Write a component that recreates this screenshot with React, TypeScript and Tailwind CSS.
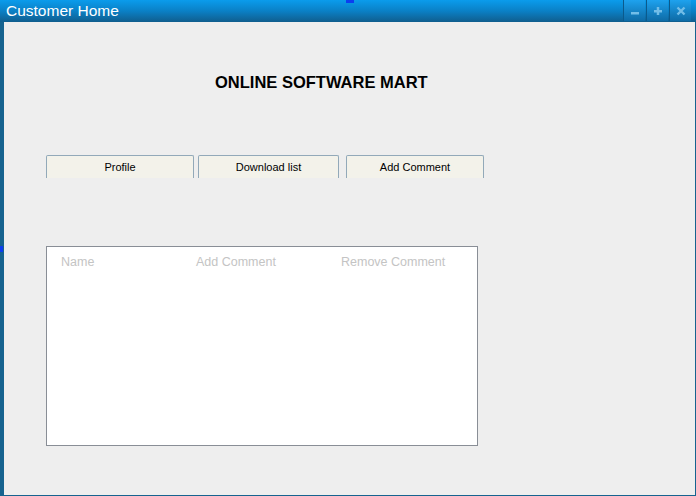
import React from "react";

const font = { fontFamily: '"Liberation Sans", Arial, sans-serif' };

function TitleButton({ children }: { children: React.ReactNode }) {
  return (
    <div className="w-[22px] h-[21px] flex items-center justify-center bg-gradient-to-b from-[#1ea2ee] to-[#0e6ba6] border-l border-[#0b5a8c]">
      {children}
    </div>
  );
}

export default function App() {
  return (
    <div className="relative w-[696px] h-[496px] flex flex-col overflow-hidden" style={font}>
      {/* title bar */}
      <div className="h-[22px] flex items-stretch bg-gradient-to-b from-[#0a9cec] via-[#0a80c6] to-[#0f5e8e]">
        <div className="flex-1 pl-[6px] text-white text-[15.5px] leading-[22px]">Customer Home</div>
        <div className="flex pr-[5px] gap-[1px] pb-[1px]">
          <TitleButton>
            <svg width="10" height="10" viewBox="0 0 10 10">
              <rect x="1" y="6" width="8" height="2.5" fill="#72bde8" />
            </svg>
          </TitleButton>
          <TitleButton>
            <svg width="10" height="10" viewBox="0 0 10 10">
              <rect x="1" y="4" width="8" height="2.5" fill="#72bde8" />
              <rect x="3.75" y="1" width="2.5" height="8" fill="#72bde8" />
            </svg>
          </TitleButton>
          <TitleButton>
            <svg width="10" height="10" viewBox="0 0 10 10">
              <path d="M1.5 1.5 L8.5 8.5 M8.5 1.5 L1.5 8.5" stroke="#72bde8" strokeWidth="2.4" />
            </svg>
          </TitleButton>
        </div>
      </div>

      {/* body */}
      <div className="flex-1 flex flex-col bg-[#eeeeee] border-l-4 border-r border-b border-[#16638f]">
        <div className="mt-[51px] pl-[211px] text-[16.5px] font-bold leading-[18px] text-black">
          ONLINE SOFTWARE MART
        </div>

        <div className="mt-[64px] pl-[42px] flex items-end">
          <div className="w-[148px] h-[23px] bg-[#f3f2ea] border-t border-l border-r border-[#92a9b9] rounded-t-[2px] text-[11px] text-black flex items-center justify-center">
            Profile
          </div>
          <div className="ml-[4px] w-[141px] h-[23px] bg-[#f3f2ea] border-t border-l border-r border-[#92a9b9] rounded-t-[2px] text-[11px] text-black flex items-center justify-center">
            Download list
          </div>
          <div className="ml-[7px] w-[138px] h-[23px] bg-[#f3f2ea] border-t border-l border-r border-[#92a9b9] rounded-t-[2px] text-[11px] text-black flex items-center justify-center">
            Add Comment
          </div>
        </div>

        <div className="mt-[68px] ml-[42px] w-[432px] h-[200px] bg-white border border-[#898e96]">
          <div className="flex pt-[8px] text-[12.5px] leading-[14px] text-[#c4c4c4]">
            <div className="pl-[14px] w-[149px]">Name</div>
            <div className="w-[145px]">Add Comment</div>
            <div>Remove Comment</div>
          </div>
        </div>
      </div>

      {/* stray blue marks */}
      <div className="absolute left-[346px] top-0 w-[8px] h-[3px] bg-[#0b3ef0]" />
      <div className="absolute left-0 top-[246px] w-[3px] h-[6px] bg-[#0b3ef0]" />
    </div>
  );
}
